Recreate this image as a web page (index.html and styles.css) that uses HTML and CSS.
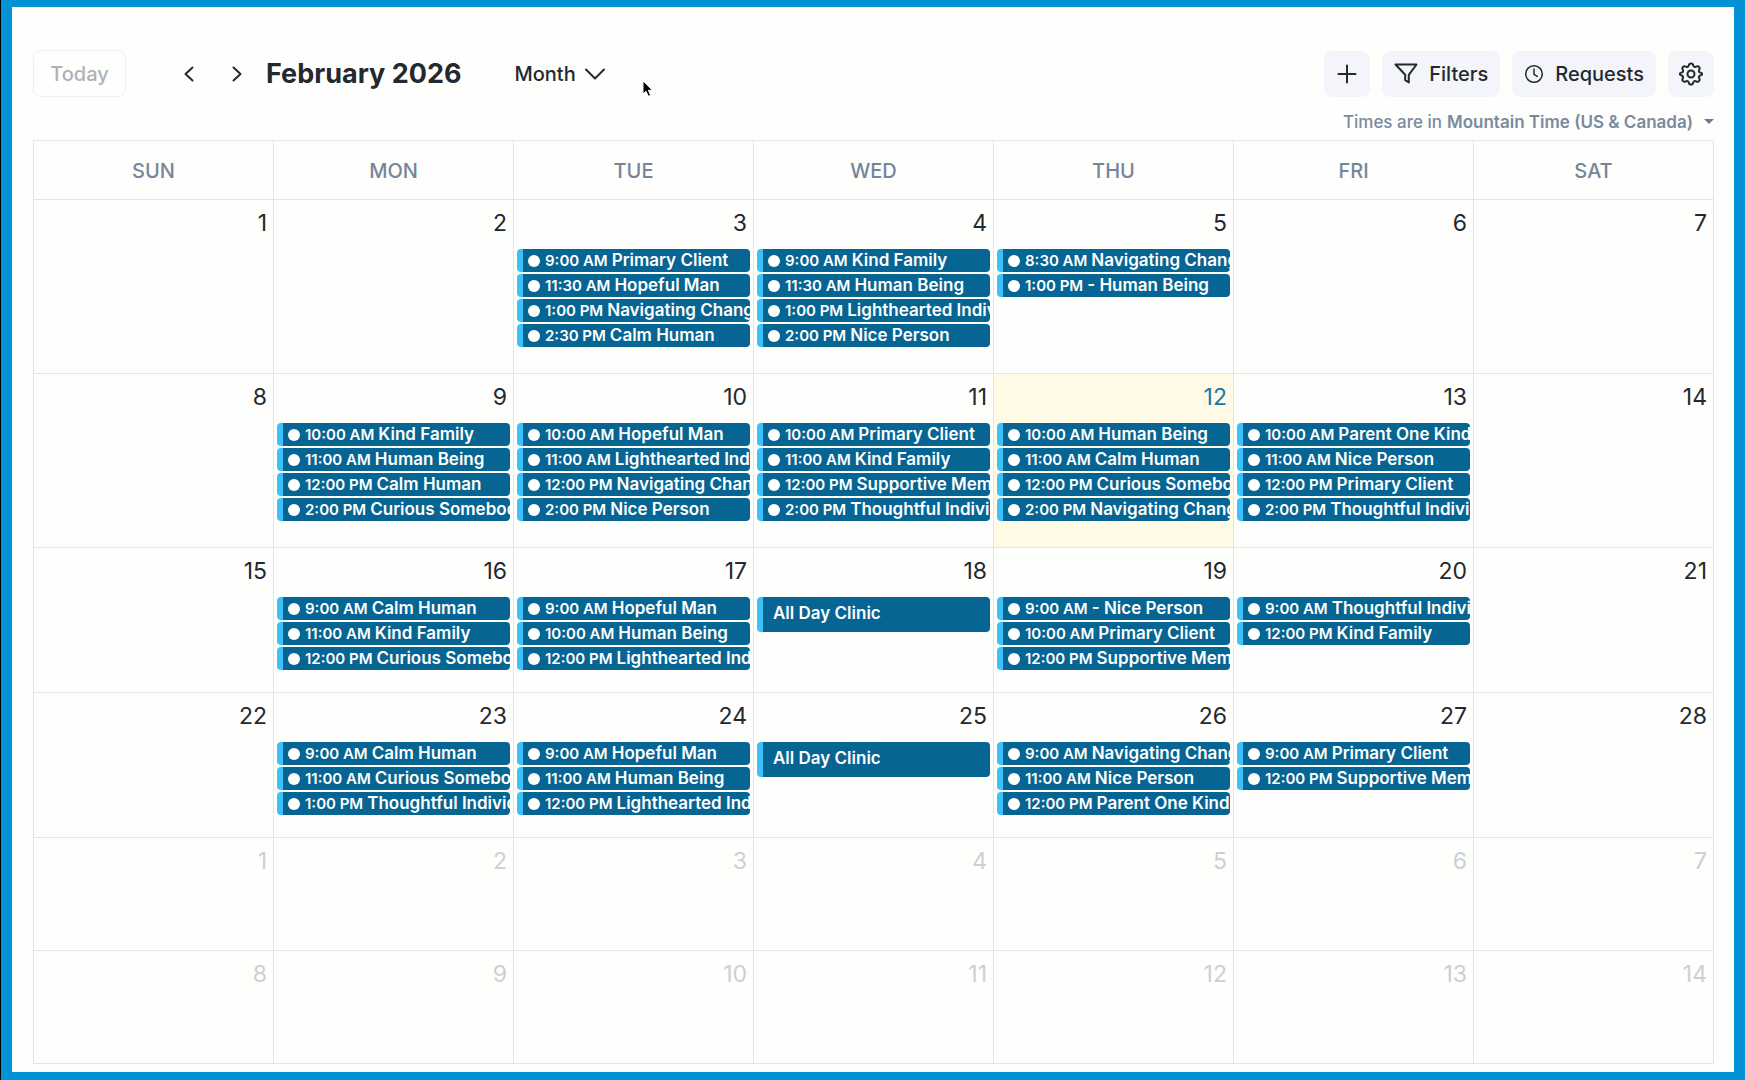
FILE: index.html
```html
<!DOCTYPE html>
<html lang="en">
<head>
    <meta charset="UTF-8">
    <meta name="viewport" content="width=device-width, initial-scale=1.0">
    <title>Calendar - February 2026</title>
    <link rel="stylesheet" href="styles.css">
</head>
<body>
    <main class="card">
        <header class="toolbar">
            <button class="btn-today" disabled>Today</button>
            <div class="nav">
                <button class="btn-nav" aria-label="Previous month">
                    <svg width="20" height="20" viewBox="0 0 20 20"><path d="M13.5 3.5 6.5 10l7 6.5"/></svg>
                </button>
                <button class="btn-nav" aria-label="Next month">
                    <svg width="20" height="20" viewBox="0 0 20 20"><path d="M6.5 3.5 13.5 10l-7 6.5"/></svg>
                </button>
            </div>
            <h1>February 2026</h1>
            <div class="view">
                <select id="view" aria-label="View">
                    <option>Month</option>
                    <option>Week</option>
                    <option>Day</option>
                </select>
                <svg width="22" height="14" viewBox="0 0 22 14"><path d="M2 2.500 11 11.500 20 2.500"/></svg>
            </div>
            <svg class="cursor" width="14" height="20" viewBox="0 0 14 20"><path d="M1 1v13l3-2.700 2.300 5 2.300-1-2.200-5h3.800z"/></svg>
            <div class="actions">
                <button class="btn btn-icon" aria-label="Add">
                    <svg width="24" height="24" viewBox="0 0 24 24"><path d="M12 3.500v17M3.500 12h17"/></svg>
                </button>
                <button class="btn">
                    <svg width="24" height="24" viewBox="0 0 24 24"><path d="M1.500 2.500h21l-7.700 10.300v7.700l-3.600-2.400v-5.300z"/></svg>
                    Filters
                </button>
                <button class="btn">
                    <svg class="thin" width="20" height="20" viewBox="0 0 20 20"><circle cx="10" cy="10" r="8.300"/><path d="M10 5v5.400l3.200 2"/></svg>
                    Requests
                </button>
                <button class="btn btn-icon" aria-label="Settings">
                    <svg width="24" height="24" viewBox="0 0 24 24"><circle cx="12" cy="12" r="3.500"/><path d="M9.700 3.500c.6-2.700 4-2.700 4.600 0 .3 1.300 1.600 1.900 2.800 1.200 2.300-1.300 4.400.8 3.100 3.100-.7 1.100-.1 2.500 1.100 2.800 2.600.6 2.600 2.200 0 2.900-1.200.3-1.800 1.600-1.100 2.700 1.300 2.300-.8 4.400-3.100 3.100-1.200-.7-2.500-.1-2.800 1.200-.6 2.700-4 2.700-4.600 0-.3-1.300-1.600-1.900-2.800-1.200-2.300 1.300-4.400-.8-3.100-3.100.7-1.100.1-2.400-1.100-2.700-2.600-.7-2.600-2.300 0-2.900 1.200-.3 1.800-1.700 1.100-2.800-1.300-2.300.8-4.400 3.100-3.100 1.200.7 2.500.1 2.800-1.200z"/></svg>
                </button>
            </div>
        </header>

        <div class="timezone">
            <label for="timezone">Times are in</label>
            <select id="timezone">
                <option>Mountain Time (US &amp; Canada)</option>
            </select>
            <svg width="10" height="6" viewBox="0 0 10 6"><path d="M0 0h10L5 5z"/></svg>
        </div>

        <table class="calendar">
            <thead>
                <tr><th>SUN</th><th>MON</th><th>TUE</th><th>WED</th><th>THU</th><th>FRI</th><th>SAT</th></tr>
            </thead>
            <tbody>
                <tr class="tall">
                    <td><div class="day">1</div></td>
                    <td><div class="day">2</div></td>
                    <td>
                        <div class="day">3</div>
                        <a href="#" class="event"><span class="time">9:00 AM</span> Primary Client</a>
                        <a href="#" class="event"><span class="time">11:30 AM</span> Hopeful Man</a>
                        <a href="#" class="event"><span class="time">1:00 PM</span> Navigating Change</a>
                        <a href="#" class="event"><span class="time">2:30 PM</span> Calm Human</a>
                    </td>
                    <td>
                        <div class="day">4</div>
                        <a href="#" class="event"><span class="time">9:00 AM</span> Kind Family</a>
                        <a href="#" class="event"><span class="time">11:30 AM</span> Human Being</a>
                        <a href="#" class="event"><span class="time">1:00 PM</span> Lighthearted Individual</a>
                        <a href="#" class="event"><span class="time">2:00 PM</span> Nice Person</a>
                    </td>
                    <td>
                        <div class="day">5</div>
                        <a href="#" class="event"><span class="time">8:30 AM</span> Navigating Change</a>
                        <a href="#" class="event"><span class="time">1:00 PM</span> - Human Being</a>
                    </td>
                    <td><div class="day">6</div></td>
                    <td><div class="day">7</div></td>
                </tr>
                <tr class="tall">
                    <td><div class="day">8</div></td>
                    <td>
                        <div class="day">9</div>
                        <a href="#" class="event"><span class="time">10:00 AM</span> Kind Family</a>
                        <a href="#" class="event"><span class="time">11:00 AM</span> Human Being</a>
                        <a href="#" class="event"><span class="time">12:00 PM</span> Calm Human</a>
                        <a href="#" class="event"><span class="time">2:00 PM</span> Curious Somebody</a>
                    </td>
                    <td>
                        <div class="day">10</div>
                        <a href="#" class="event"><span class="time">10:00 AM</span> Hopeful Man</a>
                        <a href="#" class="event"><span class="time">11:00 AM</span> Lighthearted Individual</a>
                        <a href="#" class="event"><span class="time">12:00 PM</span> Navigating Change</a>
                        <a href="#" class="event"><span class="time">2:00 PM</span> Nice Person</a>
                    </td>
                    <td>
                        <div class="day">11</div>
                        <a href="#" class="event"><span class="time">10:00 AM</span> Primary Client</a>
                        <a href="#" class="event"><span class="time">11:00 AM</span> Kind Family</a>
                        <a href="#" class="event"><span class="time">12:00 PM</span> Supportive Member</a>
                        <a href="#" class="event"><span class="time">2:00 PM</span> Thoughtful Individual</a>
                    </td>
                    <td class="today">
                        <div class="day">12</div>
                        <a href="#" class="event"><span class="time">10:00 AM</span> Human Being</a>
                        <a href="#" class="event"><span class="time">11:00 AM</span> Calm Human</a>
                        <a href="#" class="event"><span class="time">12:00 PM</span> Curious Somebody</a>
                        <a href="#" class="event"><span class="time">2:00 PM</span> Navigating Change</a>
                    </td>
                    <td>
                        <div class="day">13</div>
                        <a href="#" class="event"><span class="time">10:00 AM</span> Parent One Kind</a>
                        <a href="#" class="event"><span class="time">11:00 AM</span> Nice Person</a>
                        <a href="#" class="event"><span class="time">12:00 PM</span> Primary Client</a>
                        <a href="#" class="event"><span class="time">2:00 PM</span> Thoughtful Individual</a>
                    </td>
                    <td><div class="day">14</div></td>
                </tr>
                <tr>
                    <td><div class="day">15</div></td>
                    <td>
                        <div class="day">16</div>
                        <a href="#" class="event"><span class="time">9:00 AM</span> Calm Human</a>
                        <a href="#" class="event"><span class="time">11:00 AM</span> Kind Family</a>
                        <a href="#" class="event"><span class="time">12:00 PM</span> Curious Somebody</a>
                    </td>
                    <td>
                        <div class="day">17</div>
                        <a href="#" class="event"><span class="time">9:00 AM</span> Hopeful Man</a>
                        <a href="#" class="event"><span class="time">10:00 AM</span> Human Being</a>
                        <a href="#" class="event"><span class="time">12:00 PM</span> Lighthearted Individual</a>
                    </td>
                    <td>
                        <div class="day">18</div>
                        <a href="#" class="event all-day">All Day Clinic</a>
                    </td>
                    <td>
                        <div class="day">19</div>
                        <a href="#" class="event"><span class="time">9:00 AM</span> - Nice Person</a>
                        <a href="#" class="event"><span class="time">10:00 AM</span> Primary Client</a>
                        <a href="#" class="event"><span class="time">12:00 PM</span> Supportive Member</a>
                    </td>
                    <td>
                        <div class="day">20</div>
                        <a href="#" class="event"><span class="time">9:00 AM</span> Thoughtful Individual</a>
                        <a href="#" class="event"><span class="time">12:00 PM</span> Kind Family</a>
                    </td>
                    <td><div class="day">21</div></td>
                </tr>
                <tr>
                    <td><div class="day">22</div></td>
                    <td>
                        <div class="day">23</div>
                        <a href="#" class="event"><span class="time">9:00 AM</span> Calm Human</a>
                        <a href="#" class="event"><span class="time">11:00 AM</span> Curious Somebody</a>
                        <a href="#" class="event"><span class="time">1:00 PM</span> Thoughtful Individual</a>
                    </td>
                    <td>
                        <div class="day">24</div>
                        <a href="#" class="event"><span class="time">9:00 AM</span> Hopeful Man</a>
                        <a href="#" class="event"><span class="time">11:00 AM</span> Human Being</a>
                        <a href="#" class="event"><span class="time">12:00 PM</span> Lighthearted Individual</a>
                    </td>
                    <td>
                        <div class="day">25</div>
                        <a href="#" class="event all-day">All Day Clinic</a>
                    </td>
                    <td>
                        <div class="day">26</div>
                        <a href="#" class="event"><span class="time">9:00 AM</span> Navigating Change</a>
                        <a href="#" class="event"><span class="time">11:00 AM</span> Nice Person</a>
                        <a href="#" class="event"><span class="time">12:00 PM</span> Parent One Kind</a>
                    </td>
                    <td>
                        <div class="day">27</div>
                        <a href="#" class="event"><span class="time">9:00 AM</span> Primary Client</a>
                        <a href="#" class="event"><span class="time">12:00 PM</span> Supportive Member</a>
                    </td>
                    <td><div class="day">28</div></td>
                </tr>
                <tr class="other-month">
                    <td><div class="day">1</div></td>
                    <td><div class="day">2</div></td>
                    <td><div class="day">3</div></td>
                    <td><div class="day">4</div></td>
                    <td><div class="day">5</div></td>
                    <td><div class="day">6</div></td>
                    <td><div class="day">7</div></td>
                </tr>
                <tr class="other-month">
                    <td><div class="day">8</div></td>
                    <td><div class="day">9</div></td>
                    <td><div class="day">10</div></td>
                    <td><div class="day">11</div></td>
                    <td><div class="day">12</div></td>
                    <td><div class="day">13</div></td>
                    <td><div class="day">14</div></td>
                </tr>
            </tbody>
        </table>
    </main>
</body>
</html>
```
FILE: styles.css
```css
* { box-sizing: border-box; }
body { margin: 0; min-height: 100vh; padding: 7px 11px 8px; border-left: 1px solid #000; background: #0492d6; font-family: Inter, sans-serif; color: #25282d; }
.card { background: #fefefd; padding: 43px 20px 8px 21px; }

button, select { font: inherit; color: inherit; border: none; background: none; padding: 0; margin: 0; }
select { appearance: none; }
svg { flex: none; fill: none; stroke: #25282d; stroke-width: 2; stroke-linecap: round; stroke-linejoin: round; }

/* toolbar */
.toolbar { position: relative; display: flex; align-items: center; height: 47px; font-size: 20px; font-weight: 500; }
.btn-today { width: 93px; height: 47px; border: 1px solid #eeeff3; border-radius: 8px; color: #aeb1b6; }
.nav { display: flex; gap: 8px; margin: 0 9px 0 43px; }
.btn-nav { display: flex; align-items: center; justify-content: center; width: 40px; height: 40px; }
h1 { margin: 0; font-size: 27px; font-weight: 700; line-height: 36px; white-space: nowrap; }
.view { display: flex; align-items: center; gap: 8px; margin-left: 53px; }
.cursor { position: absolute; left: 609px; top: 30px; fill: #000; stroke: #fff; stroke-width: 1; }
.actions { display: flex; gap: 12px; margin-left: auto; }
.btn { display: flex; align-items: center; gap: 11px; height: 46px; padding: 0 12px; border-radius: 8px; background: #f3f5fb; }
.btn-icon { width: 46px; padding: 0 11px; }
.thin { stroke-width: 1.5; }

.timezone { display: flex; justify-content: flex-end; align-items: center; gap: 5px; padding: 13px 0 6px; font-size: 17px; font-weight: 500; line-height: 24px; color: #7b8a9d; }
.timezone select { font-weight: 600; }
.timezone svg { margin-left: 5px; fill: #6b7c92; stroke: none; }

/* month grid */
.calendar { width: 100%; border-collapse: collapse; table-layout: fixed; }
th, td { border: 1px solid #e3e5ea; }
th { height: 59px; padding: 2px 0 0; font-size: 20px; font-weight: 500; color: #75859a; }
td { height: 145px; padding: 0 3px; vertical-align: top; }
.tall td { height: 174px; }
.other-month td { height: 113px; }
.day { padding: 9px 3px 12px 0; font-size: 23px; line-height: 28px; text-align: right; }
.other-month .day { color: #cbcfd6; }
.today { background: #fffae6; }
.today .day { color: #1c76a8; }

.event { display: flex; align-items: center; height: 23px; margin-bottom: 2px; padding-left: 5px; border-left: 6px solid #3cc1fb; border-radius: 4px; background: #066592; color: #fff; font-size: 17px; font-weight: 600; line-height: 23px; text-decoration: none; white-space: nowrap; overflow: hidden; }
.event::before { content: ""; flex: none; width: 12px; height: 12px; margin-right: 5px; border-radius: 50%; background: #fff; }
.time { margin-right: 4px; font-size: 15px; }
.all-day { height: 35px; padding: 0 10px 3px; }
.all-day::before { display: none; }
```
